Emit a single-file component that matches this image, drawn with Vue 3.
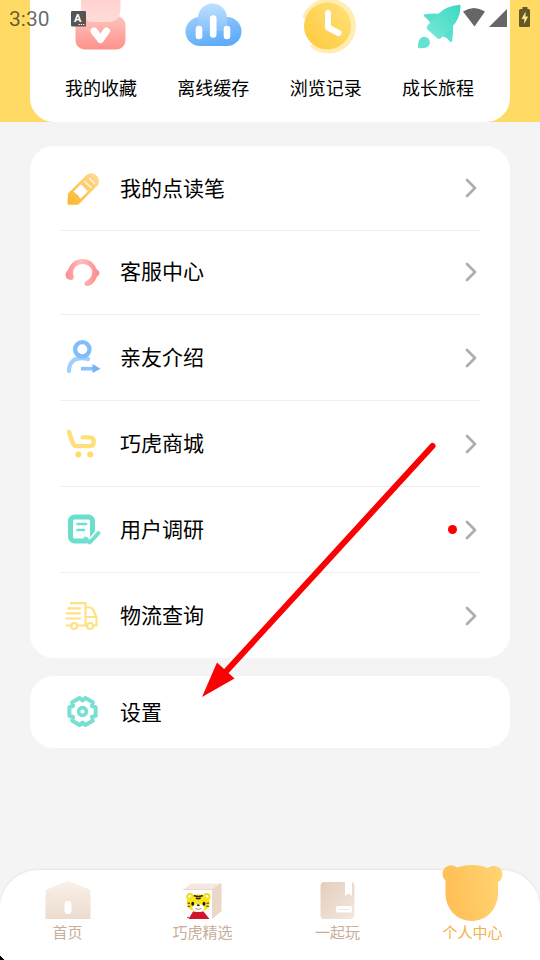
<script setup>
const shortcuts = [
  { id: 'fav', label: '我的收藏' },
  { id: 'cache', label: '离线缓存' },
  { id: 'history', label: '浏览记录' },
  { id: 'growth', label: '成长旅程' },
]
const items = [
  { id: 'pen', label: '我的点读笔' },
  { id: 'service', label: '客服中心' },
  { id: 'friend', label: '亲友介绍' },
  { id: 'shop', label: '巧虎商城' },
  { id: 'survey', label: '用户调研', dot: true },
  { id: 'truck', label: '物流查询' },
]
const tabs = [
  { id: 'home', label: '首页' },
  { id: 'select', label: '巧虎精选' },
  { id: 'play', label: '一起玩' },
  { id: 'me', label: '个人中心', active: true },
]
</script>

<template>
  <div class="page">
    <svg class="defs" width="0" height="0">
      <defs>
        <linearGradient id="pinkG" x1="0" y1="0" x2="0" y2="1"><stop offset="0" stop-color="#ffc4be" /><stop offset="1" stop-color="#fd918b" /></linearGradient>
        <linearGradient id="pinkL" x1="0" y1="0" x2="0" y2="1"><stop offset="0" stop-color="#ffcdc9" /><stop offset="1" stop-color="#ffdcd8" /></linearGradient>
        <linearGradient id="blueG" x1="0" y1="0" x2="0.5" y2="1"><stop offset="0" stop-color="#9ccdfc" /><stop offset="1" stop-color="#5eacfb" /></linearGradient>
        <linearGradient id="blueL" x1="0" y1="0" x2="0" y2="1"><stop offset="0" stop-color="#bfe0ff" /><stop offset="1" stop-color="#85c1fc" /></linearGradient>
        <linearGradient id="yelG" x1="1" y1="0" x2="0" y2="1"><stop offset="0" stop-color="#ffe27c" /><stop offset="1" stop-color="#fdc93a" /></linearGradient>
        <linearGradient id="tealG" x1="1" y1="0" x2="0" y2="1"><stop offset="0" stop-color="#3cd8c2" /><stop offset="1" stop-color="#7be8d9" /></linearGradient>
        <linearGradient id="penG" x1="1" y1="0" x2="0" y2="1"><stop offset="0" stop-color="#ffdc98" /><stop offset="1" stop-color="#fbb52a" /></linearGradient>
        <linearGradient id="svcG" x1="0" y1="0" x2="1" y2="0"><stop offset="0" stop-color="#fd8c8c" /><stop offset=".45" stop-color="#ffbcb9" /><stop offset="1" stop-color="#fc8a8a" /></linearGradient>
        <linearGradient id="beige" x1="0" y1="0" x2="0" y2="1"><stop offset="0" stop-color="#faf1e9" /><stop offset="1" stop-color="#ecdccf" /></linearGradient>
        <linearGradient id="bookG" x1="0" y1="0" x2="1" y2="1"><stop offset="0" stop-color="#e3cebc" /><stop offset="1" stop-color="#f4e8df" /></linearGradient>
        <linearGradient id="bearG" gradientUnits="userSpaceOnUse" x1="442" y1="895" x2="502" y2="885"><stop offset="0" stop-color="#ffbd55" /><stop offset="1" stop-color="#ffd471" /></linearGradient>
      </defs>
    </svg>

    <header class="hero">
      <div class="shortcuts">
        <div v-for="s in shortcuts" :key="s.id" class="shortcut">
          <svg v-if="s.id === 'fav'" width="64" height="60" viewBox="69 0 64 60">
            <rect x="75.500" y="16" width="50" height="33.500" rx="9" fill="url(#pinkG)" />
            <rect x="81" y="-12" width="39.500" height="34" rx="12" fill="url(#pinkL)" />
            <path d="M94 31l6.500 8.500L106.500 31" fill="none" stroke="#fff" stroke-width="7" stroke-linecap="round" stroke-linejoin="round" />
          </svg>
          <svg v-else-if="s.id === 'cache'" width="64" height="60" viewBox="181.500 0 64 60">
            <rect x="186" y="17" width="56" height="29" rx="14.500" fill="url(#blueG)" />
            <path d="M198.500 31V18a14.500 14.500 0 0 1 29 0v13z" fill="url(#blueL)" />
            <g stroke="#fff" stroke-width="6.600" stroke-linecap="round"><path d="M199.500 29v7M213.700 18.500v16M227.500 29v7" /></g>
          </svg>
          <svg v-else-if="s.id === 'history'" width="64" height="60" viewBox="293.500 0 64 60">
            <circle cx="328" cy="26" r="27.500" fill="#ffedb2" />
            <path d="M298 18h8l6 26-4 4-10-3z" fill="#fff" />
            <circle cx="327" cy="26" r="23.500" fill="url(#yelG)" />
            <path d="M327.500 13v14.500l10.500 5.500" fill="none" stroke="#fff" stroke-width="6" stroke-linecap="round" stroke-linejoin="round" />
          </svg>
          <svg v-else width="64" height="60" viewBox="406 0 64 60">
            <path d="M424 14.500q8-1.500 17.500-.5L432 25q-3-5-8.200-9z" fill="#58dfcd" />
            <path d="M453 24q.5 9-1 17.500-1 1-2 0-4-5-8-5z" fill="#58dfcd" />
            <path d="M458 5q3-1 2.500 2-.5 12-8.500 20L441 38q-2 1.800-4 0l-9.500-8.500q-1.500-2 0-4L438 14q8-8 20-9z" fill="url(#tealG)" />
            <path d="M418.200 48q-.7-6.500 2-9.500a5.600 5.600 0 0 1 8 8q-3 2.500-10 1.500z" fill="#64e1d0" />
          </svg>
          <span>{{ s.label }}</span>
        </div>
      </div>
    </header>

    <main class="content">
      <section class="card">
        <div v-for="it in items" :key="it.id" class="row" :class="it.id">
          <svg v-if="it.id === 'pen'" class="icon" viewBox="0 0 40 40">
            <path d="M5.500 35.500L6 25.500 24.500 7q5-3.500 9.500 0t2 10L17.500 35.500q-1.200 1.200-3 1.200h-8q-1 0-1-1.200z" fill="url(#penG)" />
            <path d="M11.500 23.500l7.500-7.300 7 7-7.500 7.500-2.500-3.500z" fill="#fff" />
            <path d="M22.500 13.500l6.500 6M27.500 10.500l5 5" stroke="#fff" stroke-width="1.500" stroke-linecap="round" opacity=".8" />
          </svg>
          <svg v-else-if="it.id === 'service'" class="icon" viewBox="0 0 40 40">
            <path d="M3.500 22.500q0-2.500 2.500-4.500C9 10.500 14 7 20.500 7S32 10.500 34.500 17q3 2 3 4t-2.800 4C33 30 30 33 26 34q-3.500.5-3.800-2.200 0-2 3-3.300c3.500-2 5-5 5-9C29.500 14.500 25 12 20.500 12c-5 0-9.500 3.500-9.500 9.500q.8 1.500.8 3.500 0 3-3 3-5.300-.5-5.300-5.500z" fill="url(#svcG)" />
          </svg>
          <svg v-else-if="it.id === 'friend'" class="icon" viewBox="0 0 40 40">
            <path d="M7 33c0-9 6-13 13-13 2.500 0 4.500.300 6 1" fill="none" stroke="#a2d0fd" stroke-width="4.300" stroke-linecap="round" />
            <circle cx="20.300" cy="11.300" r="7.200" fill="none" stroke="#82bdfb" stroke-width="4.300" />
            <path d="M19 30.700h12" stroke="#8cc3fa" stroke-width="3.600" />
            <path d="M30.500 26l8 4.700-8 4.300z" fill="#72b4f9" />
          </svg>
          <svg v-else-if="it.id === 'shop'" class="icon" viewBox="0 0 40 40">
            <path d="M6.900 7.800l3.600 10.700q1.200 3.700 4.500 3.700h12.500q4.300 0 4.300-4.400t-4.300-4.400H20.500" fill="none" stroke="#ffdf79" stroke-width="4.300" stroke-linecap="round" stroke-linejoin="round" />
            <circle cx="16.300" cy="30.500" r="3" fill="#ffdc69" /><circle cx="28.200" cy="30.500" r="3" fill="#ffdc69" />
          </svg>
          <svg v-else-if="it.id === 'survey'" class="icon" viewBox="0 0 40 40">
            <rect x="8.500" y="7" width="22" height="24" rx="4" fill="#fff" stroke="#6bdfcd" stroke-width="5" />
            <path d="M15.500 14h8.500M15.500 20h6.500" stroke="#70e0cf" stroke-width="2.700" stroke-linecap="round" />
            <path d="M21.500 23.500l6 4.500L33.200 21l5 4v10H26z" fill="#fff" />
            <path d="M23.500 28.500l4.300 4 8.700-9.500" fill="none" stroke="#74dfce" stroke-width="4" stroke-linecap="round" stroke-linejoin="round" />
          </svg>
          <svg v-else class="icon" viewBox="0 0 40 40">
            <g fill="none" stroke="#ffe185" stroke-width="2.200" stroke-linecap="round" stroke-linejoin="round">
              <path d="M9 7.200h14.500V28M6 12.300h12M4.500 17.300h13.500M4.500 22.500h13.500M24 11.500h4q2 0 3 2l3.500 8v8h-3M24 21h9M16.500 29.500h8M4.500 29.500h5" />
              <circle cx="12.200" cy="30" r="3" /><circle cx="28.200" cy="30" r="3" />
            </g>
          </svg>
          <span class="label">{{ it.label }}</span>
          <i v-if="it.dot" class="dot"></i>
          <svg class="chevron" viewBox="0 0 12 20"><path d="M2 2l8 8-8 8" fill="none" stroke="#adadad" stroke-width="2.700" stroke-linecap="round" stroke-linejoin="round" /></svg>
        </div>
      </section>

      <section class="card settings">
        <svg class="icon" viewBox="0 .5 40 40">
          <path d="M33.600 15.700v8.600L30 25.500l.8 3.700-7.400 4.300-2.900-2.500-2.900 2.500-7.400-4.300.8-3.700-3.600-1.200v-8.600l3.600-1.200-.8-3.700 7.400-4.300L20.500 9l2.900-2.500 7.400 4.300-.8 3.700z" fill="none" stroke="#78e0d2" stroke-width="4" stroke-linejoin="round" />
          <circle cx="20.500" cy="20" r="3.900" fill="none" stroke="#78e0d2" stroke-width="3.600" />
        </svg>
        <span class="label">设置</span>
      </section>
    </main>

    <nav class="tabs">
      <div v-for="t in tabs" :key="t.id" class="tab" :class="{ active: t.active }">
        <svg v-if="t.id === 'home'" width="64" height="60" viewBox="35.500 862 64 60">
          <path d="M45 891.500q0-1.500 1-2l20-8q1.500-.6 3 0l20 8q1 .5 1 2V919H45z" fill="url(#beige)" />
          <rect x="64" y="901" width="7" height="13" rx="3.500" fill="#fff" />
        </svg>
        <svg v-else-if="t.id === 'select'" width="64" height="60" viewBox="171 862 64 60">
          <path d="M183 890l8-6.500h30.500l-9 6.500z" fill="#f5e9df" />
          <path d="M212 890l9.500-6.500V911l-9.500 8z" fill="#ead7c8" />
          <path d="M183 889.700h29l9-6" stroke="#e8d6c7" fill="none" />
          <rect x="183.500" y="890" width="28.500" height="29" fill="#fff" />
          <path d="M188.500 919l4.500-7.500h10.500l6 7.500z" fill="#cf172c" />
          <circle cx="190" cy="896.800" r="3.700" fill="#f4da12" /><circle cx="206.700" cy="896.800" r="3.700" fill="#f4da12" />
          <circle cx="190" cy="896.800" r="1.800" fill="#fff" /><circle cx="206.700" cy="896.800" r="1.800" fill="#fff" />
          <ellipse cx="198.300" cy="903" rx="11.500" ry="8.800" fill="#fae31b" />
          <ellipse cx="198.300" cy="908" rx="6" ry="4" fill="#fff" />
          <path d="M193.800 895.500q4.500 1.800 9 0M196 898q2.300 1.300 4.600 0" fill="none" stroke="#292313" stroke-width="1.500" />
          <path d="M187.500 903l2.500.4M187.700 906.500l2.500-.4M209 903l-2.500.4M208.800 906.500l-2.500-.4" fill="none" stroke="#292313" stroke-width=".9" />
          <ellipse cx="192.700" cy="903.700" rx="1.400" ry="2" fill="#171717" /><ellipse cx="204" cy="903.700" rx="1.400" ry="2" fill="#171717" />
          <ellipse cx="198.300" cy="905.200" rx="1.400" ry="1" fill="#222" />
          <path d="M195.300 908.500q3 1.800 6 0" fill="none" stroke="#777" stroke-width=".8" />
          <circle cx="188" cy="917.500" r=".8" fill="#833" />
        </svg>
        <svg v-else-if="t.id === 'play'" width="64" height="60" viewBox="306 862 64 60">
          <rect x="320.500" y="882" width="34" height="37" rx="4" fill="url(#bookG)" />
          <path d="M345 881h7v15l-3.500-2.500L345 896z" fill="#fff" />
          <rect x="336" y="906" width="16" height="6.500" rx="1.500" fill="#fff" />
          <path d="M339 909.500h10" stroke="#f1e7de" stroke-width="1" />
        </svg>
        <svg v-else width="64" height="60" viewBox="440.500 862 64 60">
          <g fill="url(#bearG)">
            <circle cx="450.800" cy="874" r="8.800" /><circle cx="493.200" cy="874.500" r="8.800" />
            <path d="M455 868.500q6-3.500 16.500-3.500t16 3.500L497.500 882v12a26.200 27 0 0 1-52.500 0v-12z" />
          </g>
        </svg>
        <span>{{ t.label }}</span>
      </div>
      <svg class="corner" width="5" height="5" viewBox="0 0 5 5"><path d="M0 1h1v1h1v1h1v1h1v1H0z" fill="#000" /></svg>
    </nav>

    <div class="status">
      <span class="time">3:30</span>
      <svg class="abox" width="16" height="16" viewBox="0 0 16 16">
        <rect width="15" height="15.500" rx="1" fill="#555" />
        <text x="3" y="11" font-family="Roboto, sans-serif" font-size="11" font-weight="700" fill="#fff">A</text>
        <path d="M7.500 13.500h6" stroke="#fff" stroke-width="1.200" stroke-dasharray="1.300 1" />
      </svg>
      <svg class="system" width="70" height="22" viewBox="462 6 70 22">
        <path d="M463 11.500q11-7 22 0L474.500 26.500z" fill="#666" />
        <path d="M507 9v18h-18z" fill="#666" />
        <path d="M522.500 7h5v2h1q1.500 0 1.500 1.500V26q0 1-1.500 1h-8q-1.500 0-1.500-1V10.500q0-1.500 1.500-1.500h2z" fill="#665829" />
        <path d="M525.500 11.500l-4 7.500h2.700v5l4-7.500h-2.700z" fill="#ffe28a" />
      </svg>
    </div>

    <svg class="arrow" width="240" height="262" viewBox="200 440 240 262">
      <path d="M432.500 446L220 678" stroke="#fa0203" stroke-width="6" stroke-linecap="round" />
      <path d="M202 697l15-34.500 17.500 16z" fill="#fa0203" />
    </svg>
  </div>
</template>

<style>
body { margin: 0; background: #f4f4f4; }
</style>
<style scoped>
.page { position: relative; display: flex; flex-direction: column; width: 540px; height: 960px; overflow: hidden; background: #f4f4f4; font-family: "Noto Sans CJK SC", sans-serif; color: #000; }
svg { display: block; flex: none; }
.defs { position: absolute; }
.hero { height: 122px; padding: 0 30px; background: #ffdb66; }
.shortcuts { box-sizing: border-box; display: grid; grid-template-columns: repeat(4, 112.3px); justify-content: center; height: 122px; padding-right: 1px; background: #fff; border-radius: 0 0 24px 24px; }
.shortcut { display: flex; flex-direction: column; align-items: center; font-size: 18px; line-height: 26px; gap: 14px; }
.content { display: flex; flex-direction: column; gap: 18px; padding: 24px 30px 0; }
.card { box-sizing: border-box; height: 512px; padding: 0 30px; background: #fff; border-radius: 24px; }
.row, .settings { display: flex; align-items: center; }
.row { box-sizing: border-box; height: 86px; padding: 0 3px 0 2px; border-bottom: 1px solid #eee; }
.row.pen { height: 85px; }
.row.service { height: 84px; padding-bottom: 2px; }
.row.truck { height: 85px; border-bottom: 0; }
.settings { height: 72px; padding-left: 32px; }
.icon { width: 40px; height: 40px; margin-right: 18px; }
.label { flex: 1; padding-bottom: 3px; font-size: 21px; line-height: 30px; }
.dot { width: 9px; height: 9px; margin-right: 8px; border-radius: 50%; background: #f80000; }
.chevron { width: 12px; height: 20px; }
.tabs { position: relative; box-sizing: border-box; display: grid; grid-template-columns: repeat(4, 1fr); height: 90px; margin-top: auto; background: #fff; border-radius: 38px 38px 0 0; box-shadow: 0 -1px 2px #e5e5e5; }
.tab { display: flex; flex-direction: column; align-items: center; margin-top: -8px; font-size: 15px; line-height: 20px; color: #c9ad99; }
.tab.active { color: #f1b14b; }
.corner { position: absolute; left: 0; bottom: 0; }
.status { position: absolute; inset: 0 0 auto; display: flex; height: 37px; align-items: center; padding: 0 8px 0 9px; }
.time { width: 62px; color: rgba(0, 0, 0, .6); font: 21px Roboto, sans-serif; }
.system { margin-left: auto; margin-bottom: 3px; }
.arrow { position: absolute; left: 200px; top: 440px; }
</style>
